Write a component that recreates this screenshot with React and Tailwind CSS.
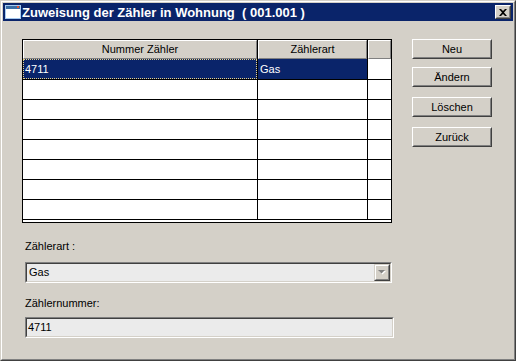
import { useState } from "react";

const ROWS = [
	{ nummer: "4711", art: "Gas" },
	{}, {}, {}, {}, {}, {}, {},
];

const BUTTONS = [
	{ label: "Neu", mt: "mt-0" },
	{ label: "Ändern", mt: "mt-[8px]" },
	{ label: "Löschen", mt: "mt-[10px]" },
	{ label: "Zurück", mt: "mt-[10px]" },
];

function ClassicButton({ label, className }) {
	return (
		<button
			className={`w-[80px] h-[20px] border border-t-white border-l-white border-b-[#404040] border-r-[#404040] bg-[#d4d0c8] p-0 ${className}`}
		>
			<div className="h-full w-full border border-t-[#d4d0c8] border-l-[#d4d0c8] border-b-[#808080] border-r-[#808080] flex items-center justify-center leading-none">
				{label}
			</div>
		</button>
	);
}

function Sunken({ className, children }) {
	return (
		<div
			className={`border border-t-[#808080] border-l-[#808080] border-b-white border-r-white ${className}`}
		>
			<div className="h-full w-full border border-t-[#404040] border-l-[#404040] border-b-[#d4d0c8] border-r-[#d4d0c8] bg-[#ebebeb] flex items-center">
				{children}
			</div>
		</div>
	);
}

function HeaderCell({ label, width, last }) {
	return (
		<div className={`${width} h-full ${last ? "" : "border-r border-black"}`}>
			<div className="h-full border border-t-white border-l-white border-b-[#808080] border-r-[#808080] flex items-center justify-center">
				{label}
			</div>
		</div>
	);
}

function MeterTable({ selected, onSelect }) {
	return (
		<div className="w-[370px] h-[184px] border border-black bg-white flex flex-col overflow-hidden">
			<div className="flex h-[19px] bg-[#d4d0c8] shrink-0">
				<HeaderCell label="Nummer Zähler" width="w-[235px]" />
				<HeaderCell label="Zählerart" width="w-[110px]" />
				<HeaderCell label="" width="w-[23px]" last />
			</div>
			{ROWS.map((row, i) => {
				const isSel = i === selected;
				return (
					<div
						key={i}
						onClick={() => onSelect(i)}
						className={`flex shrink-0 border-b border-black ${i === 0 ? "h-[21px]" : "h-[20px]"}`}
					>
						<div className={`w-[235px] border-r border-black ${isSel ? "bg-[#0a246a] text-white" : ""}`}>
							<div className={`h-full flex items-center pl-px ${isSel ? "border border-dotted border-[#e8d48c]" : ""}`}>
								{row.nummer}
							</div>
						</div>
						<div className={`w-[110px] border-r border-black flex items-center pl-[2px] ${isSel ? "bg-[#0a246a] text-white" : ""}`}>
							{row.art}
						</div>
						<div className="w-[23px]" />
					</div>
				);
			})}
		</div>
	);
}

export default function App() {
	const [selected, setSelected] = useState(0);

	return (
		<div className="w-[516px] h-[361px] border border-t-[#d4d0c8] border-l-[#d4d0c8] border-b-[#404040] border-r-[#404040] bg-[#d4d0c8] font-['Liberation_Sans',Arial,sans-serif] text-[11px] text-black">
			<div className="h-full border border-t-white border-l-white border-b-[#808080] border-r-[#808080] p-px flex flex-col">
				<div className="h-[18px] bg-[#0a246a] flex items-center shrink-0">
					<svg width="16" height="14" viewBox="0 0 16 14" className="ml-[2px] mr-[1px]">
						<rect x="0.5" y="0.5" width="15" height="13" fill="#ffffff" stroke="#a6caf0" />
						<rect x="1" y="1" width="14" height="3" fill="#3a6ea5" />
						<rect x="12" y="1" width="2" height="2" fill="#e05030" />
					</svg>
					<span className="text-white font-bold text-[13px] whitespace-pre leading-none">
						Zuweisung der Zähler in Wohnung  ( 001.001 )
					</span>
					<button className="ml-auto mr-[2px] w-[16px] h-[14px] border border-t-white border-l-white border-b-[#404040] border-r-[#404040] bg-[#d4d0c8] p-0">
						<div className="h-full w-full border border-t-[#d4d0c8] border-l-[#d4d0c8] border-b-[#808080] border-r-[#808080] flex items-center justify-center">
							<svg width="8" height="7" viewBox="0 0 8 7">
								<path d="M0 0h2l2 2 2-2h2L5 3.5 8 7H6L4 5 2 7H0l3-3.5z" fill="#000" />
							</svg>
						</div>
					</button>
				</div>

				<div className="flex-1 pl-[19px] pt-[18px] flex">
					<div className="w-[370px] shrink-0 flex flex-col">
						<MeterTable selected={selected} onSelect={setSelected} />

						<div className="ml-[3px] mt-[17px] h-[13px] leading-[13px]">Zählerart :</div>
						<Sunken className="ml-[3px] mt-[9px] w-[367px] h-[21px] shrink-0">
							<span className="pl-[2px] flex-1">Gas</span>
							<div className="w-[16px] h-[17px] border border-t-[#d4d0c8] border-l-[#d4d0c8] border-b-[#404040] border-r-[#404040] bg-[#d4d0c8]">
								<div className="h-full w-full border border-t-white border-l-white border-b-[#808080] border-r-[#808080] flex items-center justify-center">
									<svg width="8" height="5" viewBox="0 0 8 5">
										<path d="M1 1h7L4.5 4.5z" fill="#ffffff" />
										<path d="M0 0h7L3.5 3.5z" fill="#808080" />
									</svg>
								</div>
							</div>
						</Sunken>

						<div className="ml-[3px] mt-[14px] h-[13px] leading-[13px]">Zählernummer:</div>
						<Sunken className="ml-[3px] mt-[7px] w-[369px] h-[21px] shrink-0">
							<span className="pl-px">4711</span>
						</Sunken>
					</div>

					<div className="ml-[20px] flex flex-col">
						{BUTTONS.map((b) => (
							<ClassicButton key={b.label} label={b.label} className={b.mt} />
						))}
					</div>
				</div>
			</div>
		</div>
	);
}
